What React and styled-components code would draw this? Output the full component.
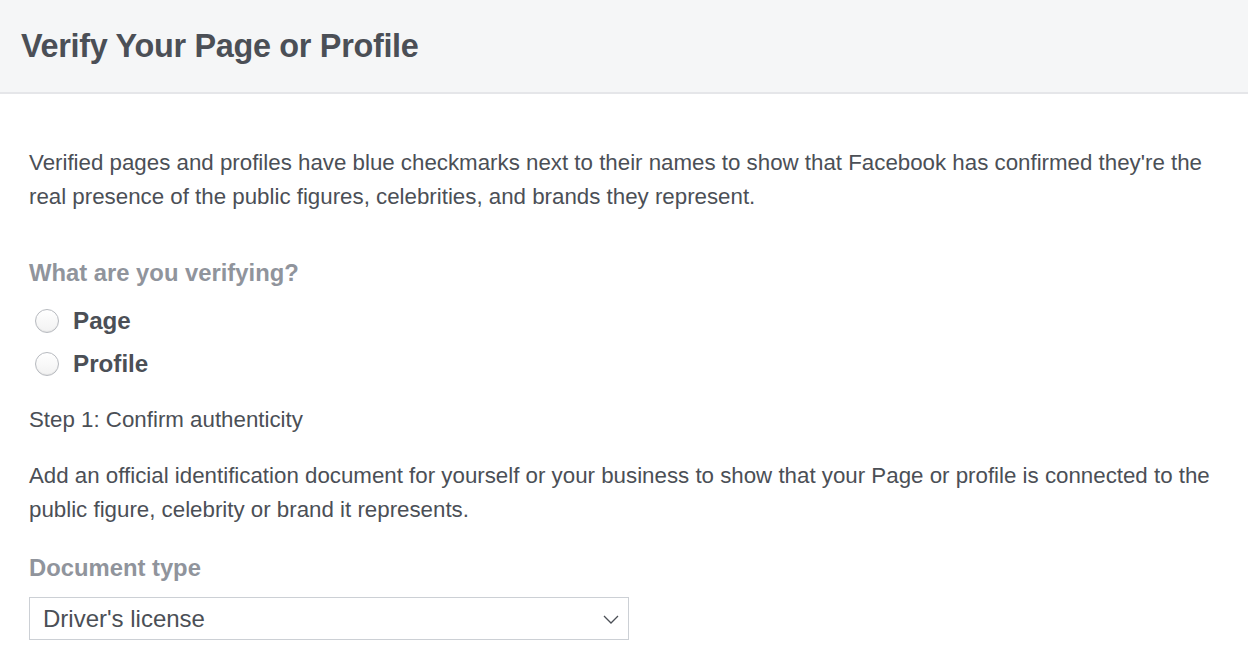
import React from "react";
import styled, { createGlobalStyle } from "styled-components";

const Global = createGlobalStyle`
  html, body { margin: 0; padding: 0; background: #fff; }
  body { font-family: "Liberation Sans", Arial, Helvetica, sans-serif; color: #4b4f56; }
`;

const Page = styled.div`
  width: 1248px;
  height: 664px;
  overflow: hidden;
  background: #fff;
`;

const Header = styled.header`
  height: 94px;
  background: #f5f6f7;
  border-bottom: 2px solid #e5e6e9;
  display: flex;
  align-items: center;
  padding: 0 21px;
  box-sizing: border-box;
`;

const Title = styled.h1`
  margin: 0;
  font-size: 32.4px;
  font-weight: bold;
  color: #4b4f56;
  letter-spacing: -0.3px;
`;

const Body = styled.main`
  padding: 52px 29px 0;
  display: flex;
  flex-direction: column;
`;

const Para = styled.p`
  margin: 0;
  margin-top: ${(p) => p.$top || 0}px;
  font-size: 22.3px;
  line-height: 34px;
  color: #4b4f56;
`;

const Label = styled.div`
  font-size: 23.8px;
  font-weight: bold;
  color: #90949c;
  line-height: 30px;
  margin-top: ${(p) => p.$top || 0}px;
`;

const RadioList = styled.div`
  display: flex;
  flex-direction: column;
  gap: 13px;
  margin-top: 18px;
  padding-left: 6px;
`;

const RadioRow = styled.label`
  display: flex;
  align-items: center;
  gap: 14px;
  height: 30px;
`;

const Circle = styled.span`
  width: 24px;
  height: 24px;
  border-radius: 50%;
  box-sizing: border-box;
  border: 1px solid #b7babf;
  background: linear-gradient(#fff, #f2f2f2);
  box-shadow: inset 0 -1px 1px rgba(0,0,0,0.06);
`;

const RadioText = styled.span`
  font-size: 24.2px;
  font-weight: bold;
  color: #4b4f56;
`;

const Step = styled.div`
  font-size: 22.3px;
  color: #4b4f56;
  line-height: 30px;
  margin-top: ${(p) => p.$top || 0}px;
`;

const Select = styled.div`
  margin-top: 14px;
  width: 600px;
  height: 43px;
  box-sizing: border-box;
  border: 1px solid #ccd0d5;
  display: flex;
  align-items: center;
  justify-content: space-between;
  padding: 0 8px 0 13px;
  font-size: 24px;
  color: #4b4f56;
`;

function Chevron() {
  return (
    <svg width="18" height="18" viewBox="0 0 18 18">
      <path d="M2 6 L9 13 L16 6" fill="none" stroke="#4b4f56" strokeWidth="1.3" />
    </svg>
  );
}

export default function App() {
  return (
    <Page>
      <Global />
      <Header>
        <Title>Verify Your Page or Profile</Title>
      </Header>
      <Body>
        <Para>
          Verified pages and profiles have blue checkmarks next to their names to show that Facebook has confirmed they're the real presence of the public figures, celebrities, and brands they represent.
        </Para>
        <Label $top={44}>What are you verifying?</Label>
        <RadioList>
          <RadioRow><Circle /><RadioText>Page</RadioText></RadioRow>
          <RadioRow><Circle /><RadioText>Profile</RadioText></RadioRow>
        </RadioList>
        <Step $top={26}>Step 1: Confirm authenticity</Step>
        <Para $top={24}>
          Add an official identification document for yourself or your business to show that your Page or profile is connected to the public figure, celebrity or brand it represents.
        </Para>
        <Label $top={26}>Document type</Label>
        <Select>
          <span>Driver's license</span>
          <Chevron />
        </Select>
      </Body>
    </Page>
  );
}
